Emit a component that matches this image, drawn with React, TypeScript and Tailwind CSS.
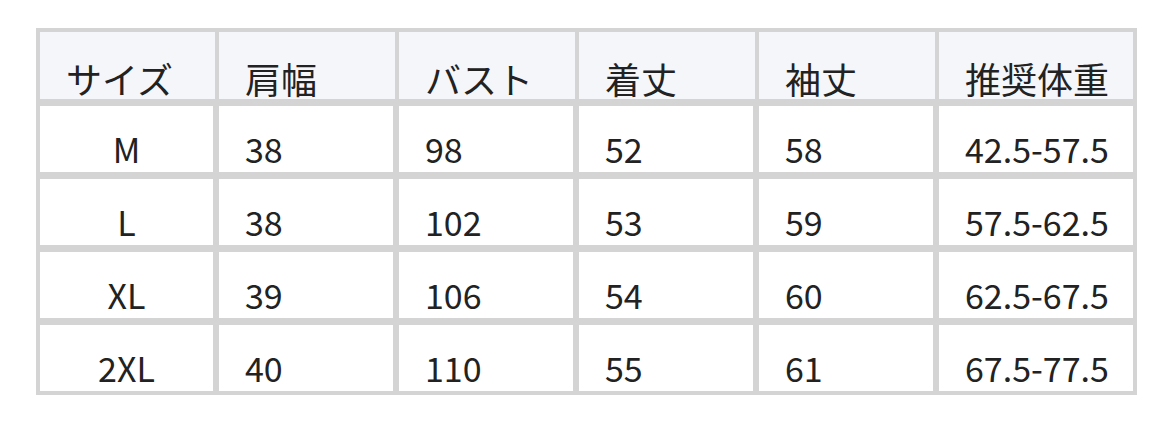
const headers = ['サイズ', '肩幅', 'バスト', '着丈', '袖丈', '推奨体重'];

const rows = [
  ['M', '38', '98', '52', '58', '42.5-57.5'],
  ['L', '38', '102', '53', '59', '57.5-62.5'],
  ['XL', '39', '106', '54', '60', '62.5-67.5'],
  ['2XL', '40', '110', '55', '61', '67.5-77.5'],
];

export default function App() {
  return (
    <div
      className="w-[1172px] h-[422px] bg-white pt-[28px] pl-[36px] text-[#222222]"
      style={{ fontFamily: '"Noto Sans CJK JP", "Noto Sans", sans-serif' }}
    >
      <div className="w-[1101px] border-4 border-[#d4d4d4] bg-[#d4d4d4] flex flex-col gap-[7px]">
        <div className="grid grid-cols-[175px_176px_176px_176px_176px_194px] gap-x-[4px]">
          {headers.map((h) => (
            <div
              key={h}
              className="h-[67px] bg-[#f5f6fa] flex items-end pl-[26px] pb-[3px] text-[36px] leading-none"
            >
              {h}
            </div>
          ))}
        </div>
        {rows.map((r) => (
          <div
            key={r[0]}
            className="grid grid-cols-[173px_174px_174px_174px_174px_194px] gap-x-[6px]"
          >
            {r.map((c, i) => (
              <div
                key={i}
                className={
                  i === 0
                    ? 'h-[66px] bg-white flex items-end justify-center pb-[6px] text-[34px] leading-none'
                    : 'h-[66px] bg-white flex items-end pl-[26px] pb-[6px] text-[34px] leading-none'
                }
              >
                {c}
              </div>
            ))}
          </div>
        ))}
      </div>
    </div>
  );
}
